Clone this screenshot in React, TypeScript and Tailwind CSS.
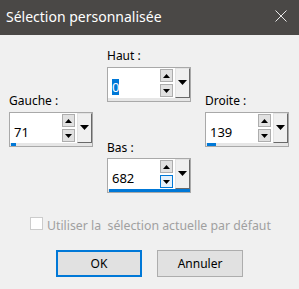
import React from "react";

const FONT = { fontFamily: '"Noto Sans", "Open Sans", sans-serif' };

function UpTri() {
  return (
    <svg width="7" height="4" viewBox="0 0 7 4" className="block">
      <polygon points="3.5,0 7,4 0,4" fill="#000" />
    </svg>
  );
}
function DownTri() {
  return (
    <svg width="7" height="4" viewBox="0 0 7 4" className="block">
      <polygon points="0,0 7,0 3.5,4" fill="#000" />
    </svg>
  );
}
function BigDownTri() {
  return (
    <svg width="9" height="5" viewBox="0 0 9 5" className="block">
      <polygon points="0,0 9,0 4.5,5" fill="#000" />
    </svg>
  );
}

function SpinBox({
  value,
  fill,
  selected = false,
  hoverDown = false,
}: {
  value: string;
  fill: number;
  selected?: boolean;
  hoverDown?: boolean;
}) {
  return (
    <div className="w-[84px] h-[35px] border border-[#a9a9a9] bg-white flex flex-col">
      <div className="flex h-[30px]">
        <div className="w-[52px] pl-[4px] pt-[6px]">
          {selected ? (
            <span className="inline-block h-[16px] leading-[16px] text-[13px] bg-[#0078d7] text-white">
              {value}
            </span>
          ) : (
            <span className="inline-block h-[16px] leading-[16px] text-[13px] text-black">
              {value}
            </span>
          )}
        </div>
        <div className="w-[15px] pt-[1px] flex flex-col gap-[2px]">
          <div className="w-[13px] h-[13px] border border-[#adadad] bg-[#e1e1e1] flex items-center justify-center">
            <UpTri />
          </div>
          {hoverDown ? (
            <div className="w-[13px] h-[13px] border border-[#0078d7] bg-[#e5f1fb] flex items-center justify-center">
              <DownTri />
            </div>
          ) : (
            <div className="w-[13px] h-[13px] border border-[#adadad] bg-[#e1e1e1] flex items-center justify-center">
              <DownTri />
            </div>
          )}
        </div>
        <div className="w-[15px] h-[30px] bg-[#f0f0f0] border-l border-t border-l-[#e3e3e3] border-t-[#e3e3e3] border-r border-b border-r-[#696969] border-b-[#696969] flex justify-center pt-[11px]">
          <BigDownTri />
        </div>
      </div>
      <div className="h-[3px] bg-[#e6e6e6] flex pl-[1px]">
        <div className="h-[3px] bg-[#0078d7]" style={{ width: fill }} />
      </div>
    </div>
  );
}

function Label({ text, mb }: { text: string; mb: string }) {
  return (
    <div className={`h-[16px] leading-[16px] text-[12px] text-black ${mb}`}>{text}</div>
  );
}

export default function App() {
  return (
    <div className="w-[299px] h-[289px] bg-[#f0f0f0] overflow-hidden flex flex-col" style={FONT}>
      <div className="h-[35px] bg-[#4a4846] flex items-start justify-between pl-[6px] pr-[12px] pt-[7px]">
        <div className="text-[14px] leading-[20px] text-white">Sélection personnalisée</div>
        <svg width="12" height="12" viewBox="0 0 12 12" className="mt-[3px]">
          <path d="M0.5 0.5 L11.5 11.5 M11.5 0.5 L0.5 11.5" stroke="#e8e8e8" strokeWidth="1" fill="none" />
        </svg>
      </div>

      <div className="flex px-[9px] gap-[14px] h-[158px]">
        <div className="w-[84px] pt-[58px] flex flex-col">
          <Label text="Gauche :" mb="mb-[3px]" />
          <SpinBox value="71" fill={5} />
        </div>
        <div className="w-[84px] pt-[13px] flex flex-col">
          <Label text="Haut :" mb="mb-[3px]" />
          <SpinBox value="0" fill={0} selected />
          <div className="h-[38px]" />
          <Label text="Bas :" mb="mb-[2px]" />
          <SpinBox value="682" fill={81} hoverDown />
        </div>
        <div className="w-[84px] pt-[58px] flex flex-col">
          <Label text="Droite :" mb="mb-[3px]" />
          <SpinBox value="139" fill={9} />
        </div>
      </div>

      <div className="mt-[24px] flex items-start pl-[30px]">
        <div className="w-[13px] h-[13px] border border-[#cccccc] bg-white" />
        <div className="ml-[4px] mt-[1px] h-[16px] leading-[16px] text-[12.3px] text-[#a0a0a0] whitespace-pre">
          Utiliser la  sélection actuelle par défaut
        </div>
      </div>

      <div className="mt-[16px] flex pl-[56px] gap-[15px]">
        <button className="w-[86px] h-[27px] border-2 border-[#0078d7] bg-[#e1e1e1] text-[12px] text-black flex items-center justify-center">
          OK
        </button>
        <button className="w-[86px] h-[27px] border border-[#adadad] bg-[#e1e1e1] text-[12px] text-black flex items-center justify-center">
          Annuler
        </button>
      </div>
    </div>
  );
}
